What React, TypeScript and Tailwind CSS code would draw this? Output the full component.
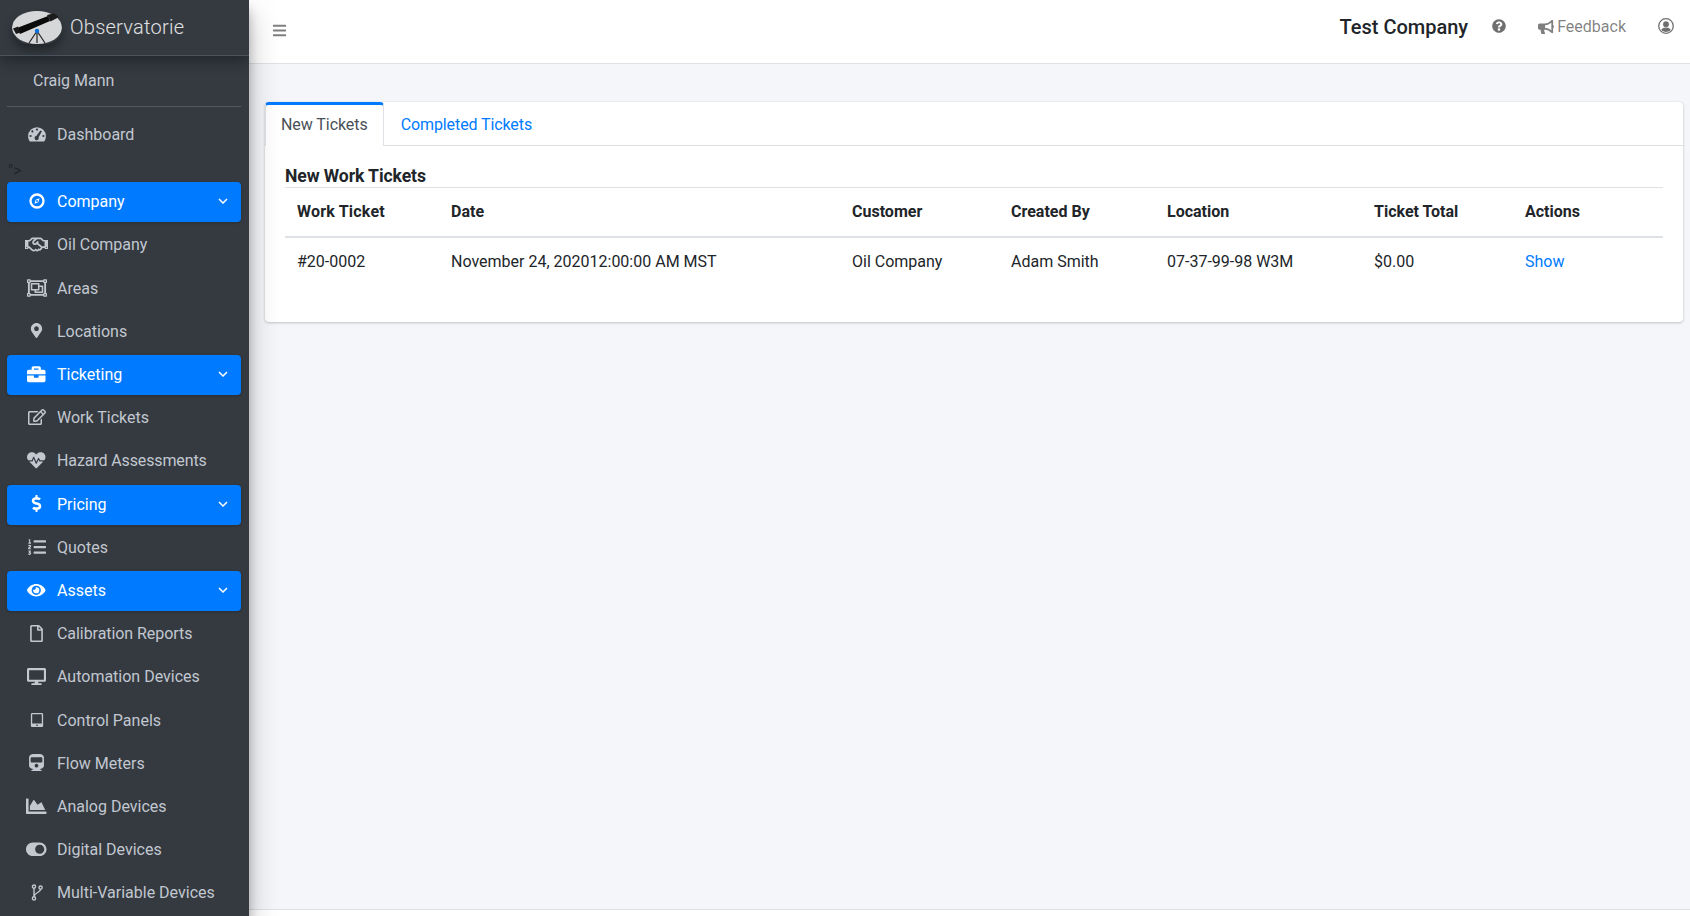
import React from "react";
import {
  FaRegHandshake, FaRegObjectGroup, FaMapMarkerAlt, FaBriefcase, FaRegEdit,
  FaHeartbeat, FaDollarSign, FaListOl, FaEye, FaRegFile, FaDesktop, FaTabletAlt, FaTrain, FaChartArea, FaToggleOn,
  FaQuestionCircle, FaBullhorn, FaBars,
} from "react-icons/fa";

type Item = {
  label: string;
  icon: React.ComponentType<{ className?: string }>;
  size: string;
  active?: boolean;
  tracking?: string;
};

function GaugeIcon() {
  return (
    <svg width="18" height="15" viewBox="0 0 18 15">
      <path d="M9 0.2 A8.9 8.9 0 0 1 17.9 9.1 C17.9 11.2 17.3 13.1 16.2 14.6 H1.8 C0.7 13.1 0.1 11.2 0.1 9.1 A8.9 8.9 0 0 1 9 0.2 Z" fill="currentColor" />
      <g fill="#343a40">
        <circle cx="9" cy="2.6" r="1.1" />
        <circle cx="4.4" cy="4.4" r="1.1" />
        <circle cx="2.6" cy="9" r="1.1" />
        <circle cx="15.4" cy="9" r="1.1" />
        <path d="M12.4 3.4 L13.9 4.2 L10.6 10.2 A2.1 2.1 0 1 1 8.3 9.1 Z" />
      </g>
    </svg>
  );
}

function CompassIcon() {
  return (
    <svg width="16" height="16" viewBox="0 0 16 16">
      <circle cx="8" cy="8" r="6.5" fill="none" stroke="currentColor" strokeWidth="2.3" />
      <path d="M10.6 5.2 L9.3 9.2 L5.4 10.8 L6.7 6.8 Z M8 7.1 A0.9 0.9 0 1 0 8 8.9 A0.9 0.9 0 1 0 8 7.1 Z" fill="currentColor" fillRule="evenodd" />
    </svg>
  );
}

function BranchIcon() {
  return (
    <svg width="12" height="17" viewBox="0 0 12 17" fill="none" stroke="currentColor" strokeWidth="1.4">
      <circle cx="3" cy="2.6" r="1.6" />
      <circle cx="9.6" cy="3.6" r="1.6" />
      <circle cx="3" cy="14.4" r="1.6" />
      <path d="M3 4.2 V12.8 M9.6 5.2 C9.6 8.4 3.4 8.6 3 12.4" />
    </svg>
  );
}

const items: Item[] = [
  { label: "Company", icon: CompassIcon, size: "text-[16px]", active: true },
  { label: "Oil Company", icon: FaRegHandshake, size: "text-[23px]" },
  { label: "Areas", icon: FaRegObjectGroup, size: "text-[20px]" },
  { label: "Locations", icon: FaMapMarkerAlt, size: "text-[15px]" },
  { label: "Ticketing", icon: FaBriefcase, size: "text-[18.5px]", active: true },
  { label: "Work Tickets", icon: FaRegEdit, size: "text-[18px]" },
  { label: "Hazard Assessments", icon: FaHeartbeat, size: "text-[18.5px]", tracking: "tracking-[-0.12px]" },
  { label: "Pricing", icon: FaDollarSign, size: "text-[17px]", active: true },
  { label: "Quotes", icon: FaListOl, size: "text-[18px]" },
  { label: "Assets", icon: FaEye, size: "text-[18.5px]", active: true },
  { label: "Calibration Reports", icon: FaRegFile, size: "text-[17px]", tracking: "tracking-[-0.06px]" },
  { label: "Automation Devices", icon: FaDesktop, size: "text-[19px]" },
  { label: "Control Panels", icon: FaTabletAlt, size: "text-[14px]" },
  { label: "Flow Meters", icon: FaTrain, size: "text-[17px]" },
  { label: "Analog Devices", icon: FaChartArea, size: "text-[20.5px]" },
  { label: "Digital Devices", icon: FaToggleOn, size: "text-[20.5px]" },
  { label: "Multi-Variable Devices", icon: BranchIcon, size: "text-[16px]" },
];

function NavRow({ item }: { item: Item }) {
  const Icon = item.icon;
  return (
    <div
      className={
        "flex h-10 mb-[3.2px] shrink-0 items-center rounded pl-4 pr-3 " +
        (item.active ? "bg-[#007bff] text-white shadow-[0_1px_3px_rgba(0,0,0,0.2)]" : "text-[#c2c7d0]")
      }
    >
      <span className={"mb-[2px] flex w-[27px] justify-center " + item.size}>
        <Icon />
      </span>
      <span className={"ml-[7px] flex-1 text-base leading-6 " + (item.tracking ?? "")}>{item.label}</span>
      {item.active && (
        <svg width="10" height="6" viewBox="0 0 10 6" className="mb-[2px] mr-[1px]" fill="none" stroke="currentColor" strokeWidth="1.5">
          <path d="M1 1 L5 5 L9 1" />
        </svg>
      )}
    </div>
  );
}

function Logo() {
  return (
    <svg width="50" height="33" viewBox="0 0 50 33" className="rounded-full shadow-[0_6px_10px_rgba(0,0,0,0.35)]">
      <ellipse cx="25" cy="16.5" rx="25" ry="16.5" fill="#d6d7d9" />
      <path d="M5 17 L36 5 L38 10 L8 23 Z" fill="#0b0b0b" />
      <path d="M35 4 L45 1.5 L48 5.5 L38.5 10.5 Z" fill="#1c1c1c" />
      <path d="M1 17.5 L6 15.5 L8.5 21.5 L4 23 Z" fill="#1a1a1a" />
      <path d="M25 20 L17 32 M25 20 L25 32 M25 20 L33 32" stroke="#222" strokeWidth="1.2" fill="none" />
      <circle cx="25" cy="20" r="2.2" fill="#0b6fdc" />
    </svg>
  );
}

function UserIcon() {
  return (
    <svg width="16" height="16" viewBox="0 0 16 16" className="ml-[32px] mb-[12px] text-[#6f6f6f]">
      <defs>
        <clipPath id="u">
          <circle cx="8" cy="8" r="6" />
        </clipPath>
      </defs>
      <circle cx="8" cy="8" r="7.3" fill="none" stroke="currentColor" strokeWidth="1.3" />
      <circle cx="8" cy="6.2" r="2.9" fill="currentColor" />
      <ellipse cx="8" cy="13.5" rx="5.5" ry="4" fill="currentColor" clipPath="url(#u)" />
    </svg>
  );
}

const cols = [
  { h: "Work Ticket", v: "#20-0002", w: "w-[154px]", t: "tracking-[0.2px]" },
  { h: "Date", v: "November 24, 202012:00:00 AM MST", w: "w-[401px]", t: "" },
  { h: "Customer", v: "Oil Company", w: "w-[159px]", t: "" },
  { h: "Created By", v: "Adam Smith", w: "w-[156px]", t: "" },
  { h: "Location", v: "07-37-99-98 W3M", w: "w-[207px]", t: "" },
  { h: "Ticket Total", v: "$0.00", w: "w-[151px]", t: "" },
  { h: "Actions", v: "Show", w: "", t: "" },
];

export default function App() {
  return (
    <div className="flex h-[916px] w-full overflow-hidden bg-[#f4f6f9] font-['Roboto',sans-serif] text-base text-[#212529]">
      <aside className="relative z-10 flex w-[249px] shrink-0 flex-col overflow-hidden bg-[#343a40] shadow-[0_14px_28px_rgba(0,0,0,0.25),0_10px_10px_rgba(0,0,0,0.22)]">
        <div className="relative z-10 flex h-[56px] shrink-0 items-center border-b border-[#4b545c] pl-3 shadow-[0_6px_12px_rgba(0,0,0,0.3)]">
          <Logo />
          <span className="mb-[2px] ml-[8px] text-[20px] font-light leading-[30px] tracking-[0.25px] text-white/85">Observatorie</span>
        </div>
        <div className="flex shrink-0 flex-col pl-[7px] pr-2">
          <div className="flex h-[51px] items-center border-b border-[#4f5962] pb-[1px] pl-[26px] text-[#c2c7d0]">Craig Mann</div>
          <div className="pt-[8px]">
            <NavRow item={{ label: "Dashboard", icon: GaugeIcon, size: "text-[18px]" }} />
          </div>
          <div className="h-[24.1px] pl-[1px] pt-[1px] leading-6 text-[#212529]">"&gt;</div>
          {items.map((item) => (
            <NavRow key={item.label} item={item} />
          ))}
        </div>
      </aside>

      <div className="flex min-w-0 flex-1 flex-col">
        <header className="flex h-[64px] shrink-0 items-center border-b border-[#dee2e6] bg-white pl-[23px] pr-[16px] text-black/50">
          <FaBars className="text-[15px] mb-[2px]" />
          <span className="ml-auto mb-[10px] text-[20px] font-medium leading-[30px] text-[#212529]">Test Company</span>
          <FaQuestionCircle className="ml-[24px] text-[14px] mb-[11px] text-[#6f6f6f]" />
          <span className="ml-[32px] flex items-center mb-[10px]">
            <FaBullhorn className="text-[16px]" />
            <span className="ml-[3px] leading-6">Feedback</span>
          </span>
          <UserIcon />
        </header>

        <main className="min-h-0 flex-1 pl-4 pr-[7px] pt-[38px]">
          <section className="h-[220px] rounded bg-white shadow-[0_0_1px_rgba(0,0,0,0.125),0_1px_3px_rgba(0,0,0,0.2)]">
            <div className="flex h-[44px] border-b border-[#dfdfdf]">
              <div className="-mb-px flex h-[44px] items-center rounded-t border-x border-t-[3px] border-x-[#dee2e6] border-t-[#007bff] bg-white px-[15px] pb-[2px] tracking-[-0.06px] text-[#495057]">
                New Tickets
              </div>
              <div className="flex items-center px-[17px] pt-[2px] tracking-[-0.1px] text-[#007bff]">Completed Tickets</div>
            </div>
            <div className="px-5 pt-[20px]">
              <h5 className="border-b border-[#dee2e6] text-[17.6px] font-bold leading-[21px] tracking-[-0.1px] text-[#212529]">New Work Tickets</h5>
              <table className="w-full table-fixed border-collapse">
                <thead>
                  <tr className="border-b-2 border-[#dee2e6]">
                    {cols.map((c) => (
                      <th key={c.h} className={"p-3 text-left font-bold leading-6 " + c.w + " " + c.t}>{c.h}</th>
                    ))}
                  </tr>
                </thead>
                <tbody>
                  <tr>
                    {cols.map((c) => (
                      <td key={c.h} className={"p-3 leading-6 " + (c.h === "Actions" ? "text-[#007bff]" : "")}>{c.v}</td>
                    ))}
                  </tr>
                </tbody>
              </table>
            </div>
          </section>
        </main>

        <footer className="h-[7px] shrink-0 border-t border-[#dee2e6] bg-white" />
      </div>
    </div>
  );
}
